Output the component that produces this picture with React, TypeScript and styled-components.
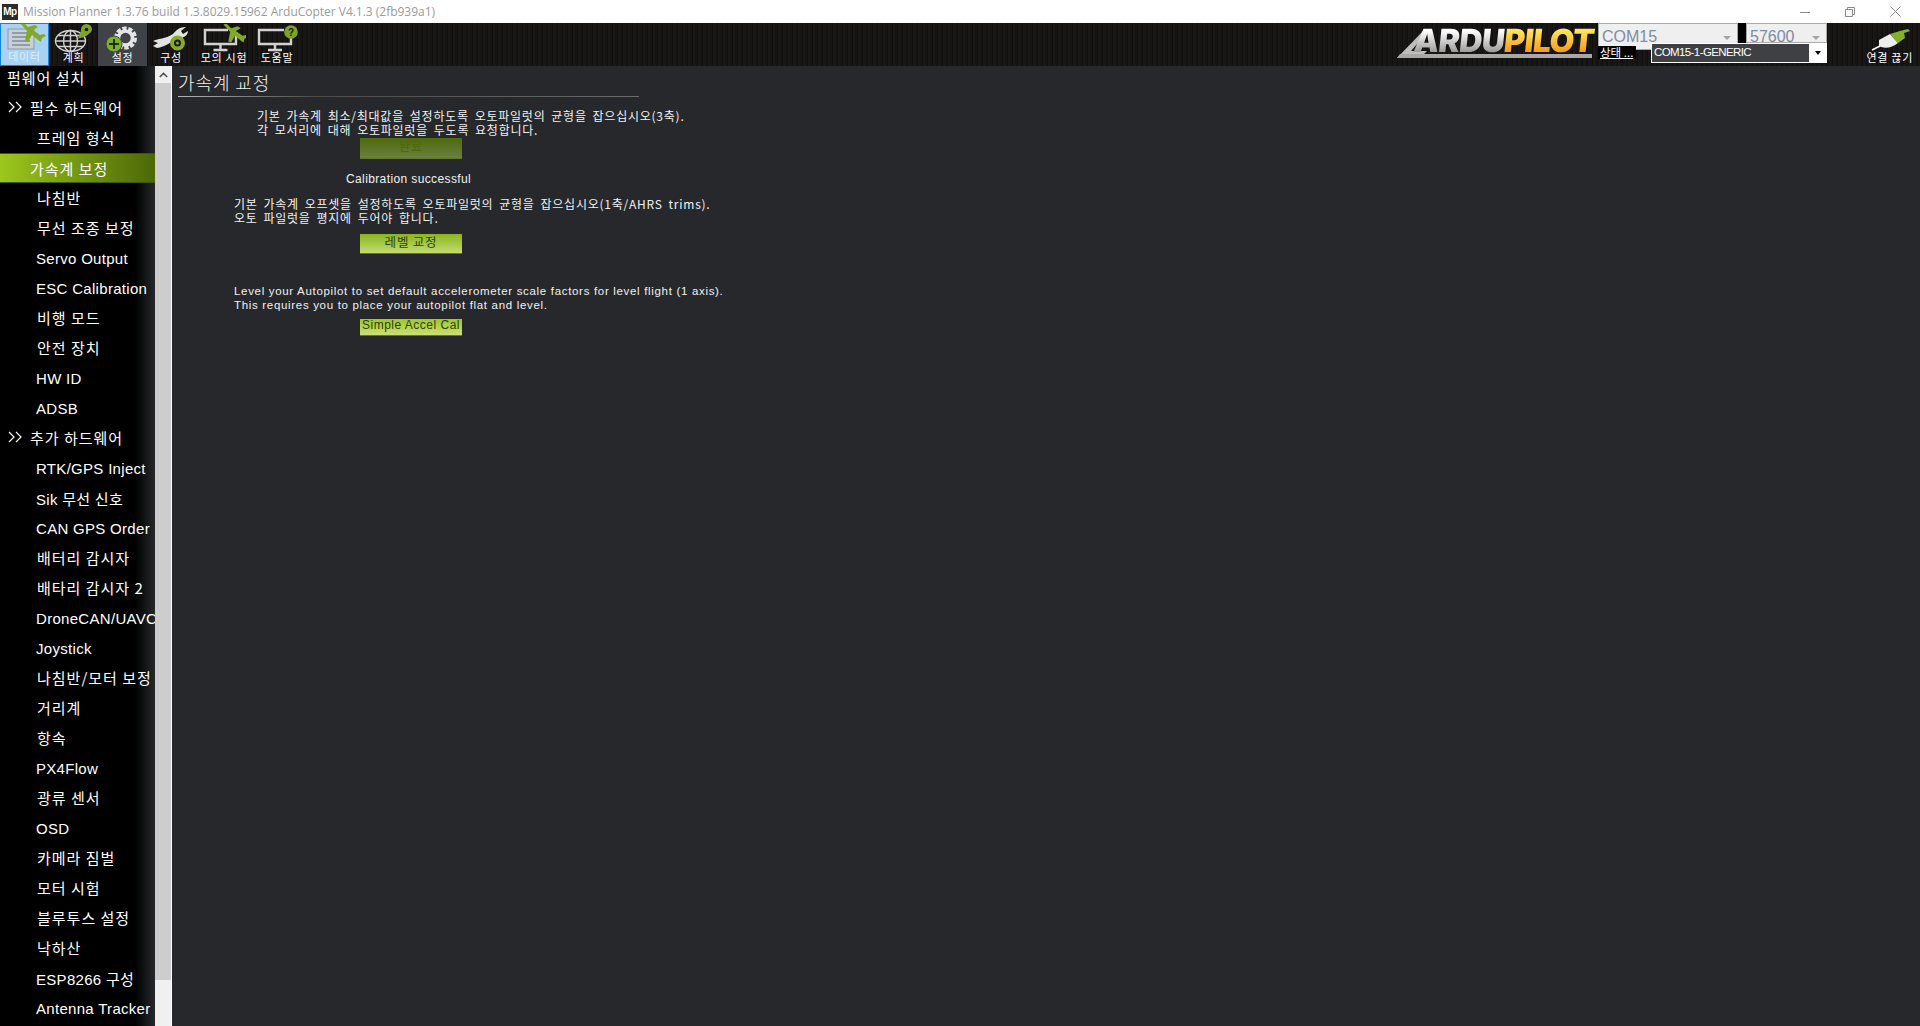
import React from "react";
import styled, { createGlobalStyle } from "styled-components";

const KR = `"Noto Sans CJK KR", "Liberation Sans", sans-serif`;
const LAT = `"Liberation Sans", "Noto Sans CJK KR", sans-serif`;

const Global = createGlobalStyle`
  html, body { margin: 0; padding: 0; height: 100%; background: #26282b; overflow: hidden; }
  #root { height: 100%; }
  * { box-sizing: border-box; }
`;

const Page = styled.div`
  width: 1920px; height: 1026px; display: flex; flex-direction: column; overflow: hidden;
  font-family: ${LAT}; color: #fff;
`;

const TitleBar = styled.div`
  height: 23px; flex: none; background: #fff; display: flex; align-items: center; padding-left: 2px;
`;
const AppIcon = styled.div`
  width: 16px; height: 16px; background: #2b2b2b; color: #fff; font-size: 10px; font-weight: bold;
  display: flex; align-items: center; justify-content: center; letter-spacing: -0.5px; margin-right: 5px;
`;
const TitleText = styled.div`
  font-family: "Open Sans", sans-serif; font-size: 12px; color: #9a9a9a; white-space: nowrap; letter-spacing: -0.02px;
`;
const WinButtons = styled.div`
  margin-left: auto; display: flex; align-items: center; height: 100%; padding-right: 19px; gap: 35px; color: #8a8a8a;
`;

const Toolbar = styled.div`
  height: 43px; flex: none; display: flex; align-items: stretch;
  background: repeating-linear-gradient(90deg, #171513 0 2px, #100f0e 2px 3px, #1a1816 3px 5px);
`;
const ToolItem = styled.div<{ $w: number; $state?: "active" | "hover" }>`
  width: ${(p) => p.$w}px; flex: none; display: flex; flex-direction: column; align-items: center; justify-content: flex-end;
  overflow: hidden; padding-bottom: 3px;
  background: ${(p) => (p.$state === "active" ? "#a9d2f2" : p.$state === "hover" ? "#3f4246" : "transparent")};
  ${(p) => (p.$state === "active" ? "border: 1px solid #0b84e2;" : "")}
`;
const ToolIcon = styled.svg`
  width: 44px; height: 28px; flex: none; display: block;
`;
const ToolLabel = styled.div<{ $pale?: boolean }>`
  font-family: ${KR}; font-size: 11px; line-height: 12px; white-space: nowrap; letter-spacing: 0.7px; margin-top: -1px;
  color: ${(p) => (p.$pale ? "#dcedfb" : "#fff")};
`;
const Spacer = styled.div`flex: 1;`;

const LogoWrap = styled.div`
  position: relative; width: 195px; height: 43px; flex: none; margin-right: 6px;
`;
const LogoSwoosh = styled.svg`
  position: absolute; left: 0; top: 0; width: 195px; height: 43px;
`;
const LogoText = styled.div`
  position: absolute; left: 17px; top: 3px; font-family: Inter, sans-serif; font-size: 32px; line-height: 30px; font-weight: 900; white-space: nowrap;
  letter-spacing: -0.7px; transform: skewX(-6deg);
`;
const LogoA = styled.span`
  background: linear-gradient(#fff 25%, #9a9a9a 80%); -webkit-background-clip: text; background-clip: text;
  -webkit-text-fill-color: transparent;
`;
const LogoB = styled.span`
  background: linear-gradient(#ffe45c 25%, #f29a1c 80%); -webkit-background-clip: text; background-clip: text;
  -webkit-text-fill-color: transparent;
`;

const PortArea = styled.div`
  position: relative; width: 229px; height: 43px; flex: none; display: flex; align-items: flex-start;
`;
const PortBox = styled.div<{ $w: number; $h: number }>`
  width: ${(p) => p.$w}px; height: ${(p) => p.$h}px; flex: none; background: #efefef; border: 1px solid #a9a9a9;
  color: #7f8da0; font-size: 16px; line-height: 25px; padding-left: 3px; position: relative;
`;
const BoxArrow = styled.i`
  position: absolute; right: 6px; top: 12px; width: 0; height: 0;
  border-left: 4px solid transparent; border-right: 4px solid transparent; border-top: 4px solid #a6a6a6;
`;
const PortGap = styled.div`width: 8px; height: 20px; background: #000; flex: none;`;
const StatusLabel = styled.div`
  position: absolute; left: 0; top: 23px; width: 38px; height: 13px; background: #000; color: #fff; font-family: ${KR};
  font-size: 11.5px; line-height: 13px; text-decoration: underline; padding-left: 2px; white-space: nowrap;
`;
const ComboDark = styled.div`
  position: absolute; right: 0; top: 20px; width: 176px; height: 20px; background: #fff; padding: 1px; display: flex;
`;
const ComboText = styled.div`
  flex: 1; background: #3e4043; color: #fff; font-size: 11.5px; line-height: 17px; padding-left: 2px; letter-spacing: -0.6px; white-space: nowrap;
`;
const ComboArrow = styled.div`
  width: 17px; display: flex; align-items: center; justify-content: center;
  &::after { content: ""; border-left: 3.5px solid transparent; border-right: 3.5px solid transparent; border-top: 4px solid #000; }
`;
const Disconnect = styled.div`
  width: 93px; flex: none; display: flex; flex-direction: column; align-items: flex-end; justify-content: flex-end; padding: 0 7px 3px 0;
`;
const PlugIcon = styled.svg`width: 42px; height: 24px; display: block; margin-right: 1px;`;

const Main = styled.div`flex: 1; min-height: 0; display: flex;`;

const Sidebar = styled.nav`
  width: 155px; flex: none; overflow: hidden;
  background: linear-gradient(90deg, #000 0, #000 135px, #26282b 155px);
`;
const Row = styled.div<{ $kind: "top" | "head" | "item" | "sel"; $latin?: boolean }>`
  height: ${(p) => (p.$kind === "top" ? 27 : 30)}px; display: flex; align-items: center; white-space: nowrap; font-size: 15px; color: #fff;
  font-family: ${KR}; letter-spacing: 1px; width: 155px; overflow: hidden;
  padding-left: ${(p) => (p.$kind === "top" ? 7 : p.$kind === "head" ? 8 : p.$kind === "sel" ? 30 : p.$latin ? 36 : 37)}px;
  padding-bottom: ${(p) => (p.$kind === "top" ? 5 : p.$kind === "sel" || p.$latin ? 0 : 2)}px;
  ${(p) => p.$kind === "sel" ? `
    background: linear-gradient(90deg, #9cc71d 0%, #4c6807 100%);
    border-top: 1px solid #3f5708; border-bottom: 1px solid #3f5708;
  ` : ""}
`;
const LatinText = styled.span`font-family: ${LAT}; letter-spacing: 0.3px;`;
const Chevrons = styled.svg`width: 16px; height: 12px; margin-right: 6px; flex: none;`;

const Scrollbar = styled.div`
  width: 17px; flex: none; background: #f0f0f0; border-right: 1px solid #fff; display: flex; flex-direction: column;
`;
const ScrollUp = styled.div`
  height: 17px; display: flex; align-items: center; justify-content: center; flex: none;
`;
const ScrollThumb = styled.div`height: 897px; background: #cdcdcd; flex: none;`;

const Content = styled.main`flex: 1; background: #26282b; padding-left: 6px; font-family: ${KR}; font-size: 12px;`;
const Heading = styled.div`
  width: 461px; height: 31px; font-size: 18px; line-height: 32px; color: #f4f4f4; letter-spacing: 0.9px; font-weight: 300;
  border-bottom: 1px solid; border-image: linear-gradient(90deg, #b5b5b5, #4a4a4a 30%, #6a6a6a 100%) 1;
`;
const Para = styled.div<{ $left: number; $top: number }>`
  margin: ${(p) => p.$top}px 0 0 ${(p) => p.$left}px; line-height: 14px; color: #f2f2f2; white-space: pre;
  letter-spacing: 0.76px; word-spacing: 2.4px; font-size: 12px;
`;
const LatinPara = styled(Para)`font-family: ${LAT}; letter-spacing: 0.68px; word-spacing: 0; font-size: 11.5px;`;
const Status = styled.div`
  margin: 13px 0 0 168px; line-height: 14px; color: #f2f2f2; font-family: ${LAT}; font-size: 12px; letter-spacing: 0.38px;
`;
const Btn = styled.div<{ $top: number; $h: number; $tone: "off" | "on" | "lime" }>`
  margin: ${(p) => p.$top}px 0 0 182px; width: 102px; height: ${(p) => p.$h}px; text-align: center;
  border-bottom: 1px solid #5f7a1c; white-space: nowrap; font-size: 12.5px;
  line-height: ${(p) => (p.$tone === "lime" ? 13 : 16)}px;
  letter-spacing: 0.8px;
  color: ${(p) => (p.$tone === "off" ? "#4d680f" : "#2f4008")};
  background: ${(p) => p.$tone === "off" ? "linear-gradient(#4d6a0b, #6c7f42)" : p.$tone === "on" ? "linear-gradient(#8ab41f, #c3dc70)" : "linear-gradient(#9fc62b, #c9e173)"};
  ${(p) => (p.$tone === "lime" ? `font-family: ${LAT}; font-size: 12px; letter-spacing: 0.5px;` : "")}
`;

const Plane = ({ x, y, s = 1 }: { x: number; y: number; s?: number }) => (
  <path
    transform={`translate(${x} ${y}) scale(${s})`}
    fill="#83a92a"
    d="M-11 -9 L-8 -10 L-3 -5 L4 -7 L7 -5 L2 -2 L9 3 L13 2 L15 4 L11 6 L10 10 L7 8 L1 3 L-3 10 L-6 9 L-4 -1 Z"
  />
);

const Monitor = ({ x, w, open }: { x: number; w: number; open: number }) => (
  <g fill="none" stroke="#d2d2d2" strokeWidth="2.4">
    <path d={`M${x + w - open} 6 H${x} V20 H${x + w} V12`} />
    <path d={`M${x + w / 2} 20 V25 M${x + w / 2 - 7} 26 H${x + w / 2 + 7}`} />
  </g>
);

const items: Array<[string, "top" | "head" | "item" | "sel", boolean?]> = [
  ["펌웨어 설치", "top"], ["필수 하드웨어", "head"], ["프레임 형식", "item"], ["가속계 보정", "sel"], ["나침반", "item"],
  ["무선 조종 보정", "item"], ["Servo Output", "item", true], ["ESC Calibration", "item", true], ["비행 모드", "item"],
  ["안전 장치", "item"], ["HW ID", "item", true], ["ADSB", "item", true], ["추가 하드웨어", "head"],
  ["RTK/GPS Inject", "item", true], ["Sik 무선 신호", "item", true], ["CAN GPS Order", "item", true], ["배터리 감시자", "item"],
  ["배타리 감시자 2", "item"], ["DroneCAN/UAVCAN", "item", true], ["Joystick", "item", true], ["나침반/모터 보정", "item"],
  ["거리계", "item"], ["항속", "item"], ["PX4Flow", "item", true], ["광류 센서", "item"], ["OSD", "item", true],
  ["카메라 짐벌", "item"], ["모터 시험", "item"], ["블루투스 설정", "item"], ["낙하산", "item"], ["ESP8266 구성", "item", true],
  ["Antenna Tracker", "item", true],
];

export default function App() {
  return (
    <Page>
      <Global />
      <TitleBar>
        <AppIcon>Mp</AppIcon>
        <TitleText>Mission Planner 1.3.76 build 1.3.8029.15962 ArduCopter V4.1.3 (2fb939a1)</TitleText>
        <WinButtons>
          <svg width="10" height="10" viewBox="0 0 10 10"><path d="M0 5.5H10" stroke="currentColor" /></svg>
          <svg width="10" height="10" viewBox="0 0 10 10" fill="none" stroke="currentColor"><path d="M.5 2.5H7.5V9.5H.5ZM2.5 2.5V.5H9.5V7.5H7.5" /></svg>
          <svg width="11" height="11" viewBox="0 0 11 11" stroke="currentColor"><path d="M.5 .5L10.5 10.5M10.5 .5L.5 10.5" /></svg>
        </WinButtons>
      </TitleBar>

      <Toolbar>
        <ToolItem $w={49} $state="active">
          <ToolIcon viewBox="0 0 44 28">
            <rect x="5" y="6" width="26" height="20" fill="#c9d0d8" stroke="#8f9aa4" />
            <path d="M9 10H27M9 14H27M9 18H27M9 22H27" stroke="#7e8a95" strokeWidth="1.5" />
            <Plane x={28} y={9} />
          </ToolIcon>
          <ToolLabel $pale>데이터</ToolLabel>
        </ToolItem>
        <ToolItem $w={49}>
          <ToolIcon viewBox="0 0 44 28">
            <g fill="none" stroke="#d0d0d0" strokeWidth="1.4">
              <ellipse cx="18.5" cy="17" rx="15" ry="10.5" />
              <ellipse cx="18.5" cy="17" rx="7" ry="10.5" />
              <path d="M18.5 6.5V27.5M3.5 17H33.5M6 11.5H31M6 22.5H31" />
            </g>
            <path d="M34.5 0a5.5 5.5 0 0 1 5.5 5.5c0 3.5 -7 8 -14 9c1-3 3-6 3-9a5.5 5.5 0 0 1 5.5-5.5Z" fill="#7fa32a" />
            <circle cx="34.5" cy="5.5" r="1.8" fill="#1a1a1a" />
          </ToolIcon>
          <ToolLabel>계획</ToolLabel>
        </ToolItem>
        <ToolItem $w={49} $state="hover">
          <ToolIcon viewBox="0 0 44 28">
            <circle cx="24.5" cy="14" r="9" fill="none" stroke="#e4e4e4" strokeWidth="5" strokeDasharray="4 1.6" />
            <circle cx="24.5" cy="14" r="7" fill="none" stroke="#e4e4e4" strokeWidth="3.5" />
            <circle cx="13" cy="20" r="8" fill="#7fb02a" stroke="#3f4246" />
            <path d="M13 15V25M8 20H18" stroke="#20300a" strokeWidth="2" />
          </ToolIcon>
          <ToolLabel>설정</ToolLabel>
        </ToolItem>
        <ToolItem $w={48}>
          <ToolIcon viewBox="0 0 44 28">
            <path d="M4 17C11 14 17 15 24 10C27 7 29 3 37 3L32 7L34 10L39 7C39 12 33 15 28 14C22 18 16 23 8 24L4 22L9 19Z" fill="#e2e2e2" />
            <circle cx="28.5" cy="19" r="5.5" fill="#1a1a1a" stroke="#8aa82a" strokeWidth="4" />
            <circle cx="28.5" cy="19" r="1.5" fill="#8aa82a" />
          </ToolIcon>
          <ToolLabel>구성</ToolLabel>
        </ToolItem>
        <ToolItem $w={58}>
          <ToolIcon viewBox="0 0 44 28">
            <Monitor x={3} w={31} open={8} />
            <Plane x={32} y={9} s={0.95} />
          </ToolIcon>
          <ToolLabel>모의 시험</ToolLabel>
        </ToolItem>
        <ToolItem $w={48}>
          <ToolIcon viewBox="0 0 44 28">
            <Monitor x={4} w={32} open={7} />
            <circle cx="36" cy="8" r="6.8" fill="#7fa32a" />
            <text x="36" y="11.5" textAnchor="middle" fontSize="10" fontWeight="bold" fill="#16200a" fontFamily="Liberation Sans">?</text>
          </ToolIcon>
          <ToolLabel>도움말</ToolLabel>
        </ToolItem>
        <Spacer />
        <LogoWrap>
          <LogoSwoosh viewBox="0 0 195 43">
            <path d="M0 35L26 8H31L14 28H30L27 31H11L7 35Z" fill="#bdbdbd" />
            <path d="M3 31H195V35H0Z" fill="#a8a8a8" />
          </LogoSwoosh>
          <LogoText><LogoA>ARDU</LogoA><LogoB>PILOT</LogoB></LogoText>
        </LogoWrap>
        <PortArea>
          <PortBox $w={140} $h={27}>COM15<BoxArrow /></PortBox>
          <PortGap />
          <PortBox $w={81} $h={20}>57600<BoxArrow /></PortBox>
          <StatusLabel>상태 ...</StatusLabel>
          <ComboDark><ComboText>COM15-1-GENERIC</ComboText><ComboArrow /></ComboDark>
        </PortArea>
        <Disconnect>
          <PlugIcon viewBox="0 0 42 24">
            <path d="M2 22L10 18" stroke="#fff" strokeWidth="1.5" />
            <path d="M9 12L20 6L28 15C22 20 14 21 9 18Z" fill="#eeeeee" />
            <path d="M20 6L30 3L38 1L40 3L34 5L35 10L28 15Z" fill="#86b02a" />
          </PlugIcon>
          <ToolLabel>연결 끊기</ToolLabel>
        </Disconnect>
      </Toolbar>

      <Main>
        <Sidebar>
          {items.map(([label, kind, latin]) => (
            <Row key={label} $kind={kind} $latin={latin}>
              {kind === "head" && (
                <Chevrons viewBox="0 0 16 12" fill="none" stroke="#fff" strokeWidth="1.2">
                  <path d="M1 1L6 6L1 11M8 1L13 6L8 11" />
                </Chevrons>
              )}
              {latin ? <LatinText>{label}</LatinText> : label}
            </Row>
          ))}
        </Sidebar>
        <Scrollbar>
          <ScrollUp>
            <svg width="9" height="6" viewBox="0 0 9 6"><path d="M.8 5L4.5 1.4L8.2 5" fill="none" stroke="#505050" strokeWidth="1.6" /></svg>
          </ScrollUp>
          <ScrollThumb />
        </Scrollbar>
        <Content>
          <Heading>가속계 교정</Heading>
          <Para $left={79} $top={12}>{"기본 가속계 최소/최대값을 설정하도록 오토파일럿의 균형을 잡으십시오(3축).\n각 모서리에 대해 오토파일럿을 두도록 요청합니다."}</Para>
          <Btn $top={1} $h={21} $tone="off">완료</Btn>
          <Status>Calibration successful</Status>
          <Para $left={56} $top={11}>{"기본 가속계 오프셋을 설정하도록 오토파일럿의 균형을 잡으십시오(1축/AHRS trims).\n오토 파일럿을 평지에 두어야 합니다."}</Para>
          <Btn $top={9} $h={20} $tone="on">레벨 교정</Btn>
          <LatinPara $left={56} $top={30}>{"Level your Autopilot to set default accelerometer scale factors for level flight (1 axis).\nThis requires you to place your autopilot flat and level."}</LatinPara>
          <Btn $top={7} $h={17} $tone="lime">Simple Accel Cal</Btn>
        </Content>
      </Main>
    </Page>
  );
}
